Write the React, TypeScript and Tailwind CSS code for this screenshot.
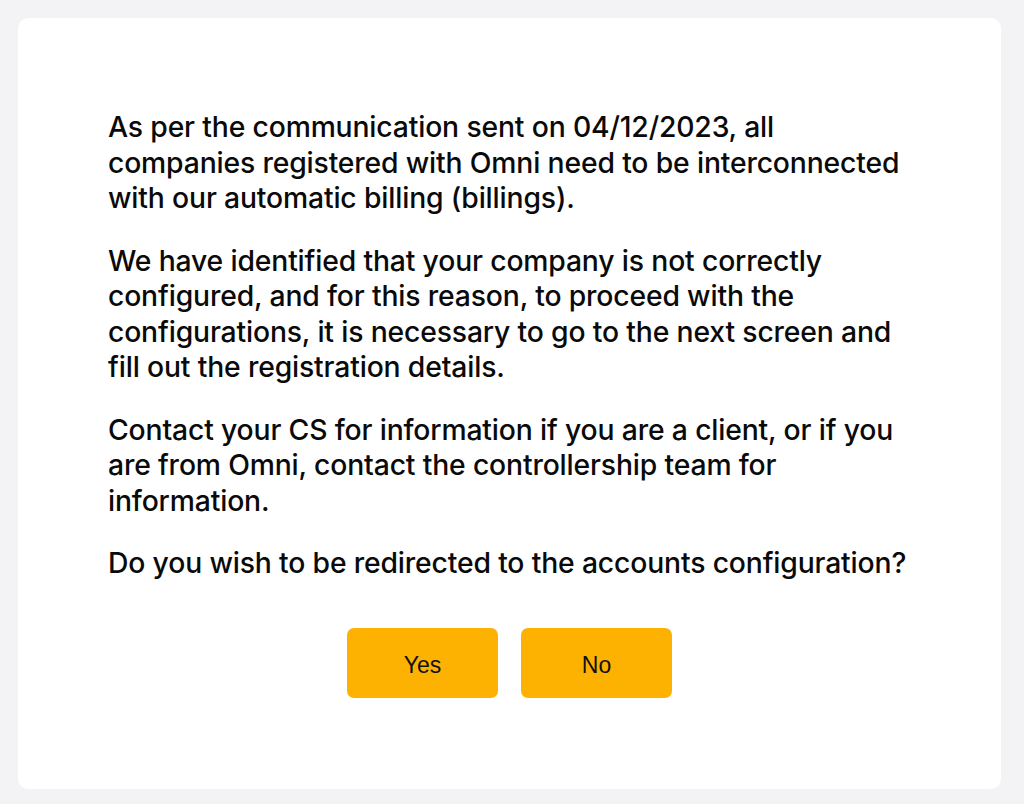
export default function App() {
  const paragraphs = [
    "As per the communication sent on 04/12/2023, all companies registered with Omni need to be interconnected with our automatic billing (billings).",
    "We have identified that your company is not correctly configured, and for this reason, to proceed with the configurations, it is necessary to go to the next screen and fill out the registration details.",
    "Contact your CS for information if you are a client, or if you are from Omni, contact the controllership team for information.",
    "Do you wish to be redirected to the accounts configuration?",
  ];

  return (
    <div className="min-h-screen bg-[#f3f3f5] p-[18px] font-['Inter',sans-serif]">
      <div className="bg-white rounded-[10px] px-[90px] pt-[92px] pb-[92px] h-[771px] w-[983px]">
        <div className="flex flex-col gap-[27px] text-[28.3px] leading-[35.5px] font-medium tracking-[-0.15px] text-[#0a0a0a]">
          {paragraphs.map((p) => (
            <p key={p}>{p}</p>
          ))}
        </div>
        <div className="flex justify-center gap-[23px] mt-[46px] font-['Liberation_Sans',Arial,sans-serif]">
          <button className="w-[151px] h-[70px] pt-[6px] rounded-[7px] bg-[#fdb202] text-[23px] text-[#111]">
            Yes
          </button>
          <button className="w-[151px] h-[70px] pt-[6px] rounded-[7px] bg-[#fdb202] text-[23px] text-[#111]">
            No
          </button>
        </div>
      </div>
    </div>
  );
}
